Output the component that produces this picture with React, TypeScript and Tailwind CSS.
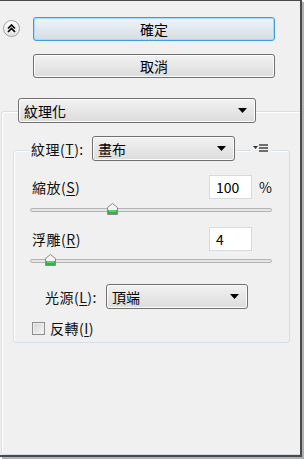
import React from 'react';

const FONT = { fontFamily: '"Segoe UI", "Noto Sans CJK TC", "Noto Sans", sans-serif' };

function Mn({ k }: { k: string }) {
  return (
    <span>
      (<span className="underline underline-offset-2">{k}</span>)
    </span>
  );
}

function Caret() {
  return (
    <svg width="9" height="5" viewBox="0 0 9 5" className="shrink-0">
      <path d="M0 0h9L4.5 5z" fill="#000" />
    </svg>
  );
}

function Combo({ label, className }: { label: string; className: string }) {
  return (
    <div
      className={`flex items-center justify-between h-[25px] pl-[5px] pr-[8px] border border-[#707070] rounded-[3px] bg-gradient-to-b from-[#f2f2f2] to-[#dcdcdc] shadow-[inset_0_0_0_1px_#fcfcfc] ${className}`}
    >
      <span className="text-[14px] leading-none text-black">{label}</span>
      <Caret />
    </div>
  );
}

function Slider({ pos }: { pos: number }) {
  return (
    <div className="relative h-[13px] ml-[16px] w-[242px]">
      <div className="absolute left-0 right-0 top-[5px] h-[4px] rounded-full border border-[#b4b4b4] bg-[#e6e6e6]" />
      <svg
        width="11"
        height="12"
        viewBox="0 0 11 12"
        className="absolute top-0"
        style={{ left: pos - 5 }}
      >
        <path d="M5.5 0.5L10.5 4.5V11.5H0.5V4.5Z" fill="#f4f4f4" stroke="#8a8a8a" />
        <path d="M1 7H10V11H1Z" fill="#2fb34a" />
        <path d="M2 8H9" stroke="#8fe09a" />
      </svg>
    </div>
  );
}

function NumInput({ value }: { value: string }) {
  return (
    <div className="w-[43px] h-[24px] bg-white border border-[#d4dae0] flex items-center pl-[6px] text-[14px] leading-none text-black">
      {value}
    </div>
  );
}

export default function App() {
  return (
    <div className="w-[304px] h-[459px] bg-white" style={FONT}>
      <div className="w-[302px] h-[457px] bg-[#f0f0f0] border-t border-r-2 border-b-2 border-[#4a4a4a] shadow-[2px_2px_1px_#b0b0b0] overflow-hidden text-[#111]">
        {/* Buttons */}
        <div className="flex items-start mt-[16px]">
          <div className="ml-[3px] mt-[3px] w-[17px] h-[17px] rounded-full border border-[#9aa0a6] bg-gradient-to-b from-white to-[#e4e4e4] flex items-center justify-center">
            <svg width="9" height="9" viewBox="0 0 9 9">
              <path d="M1 4.5L4.5 1L8 4.5M1 8L4.5 4.5L8 8" fill="none" stroke="#000" strokeWidth="1.6" />
            </svg>
          </div>
          <div className="ml-[13px] flex flex-col gap-[13px]">
            <button className="w-[242px] h-[24px] rounded-[3px] border border-[#3c9fd6] shadow-[inset_0_0_0_1px_#a8dcf6] bg-gradient-to-b from-[#eef5fa] to-[#d5dde3] text-[14px] leading-none text-black">
              確定
            </button>
            <button className="w-[242px] h-[24px] rounded-[3px] border border-[#707070] shadow-[inset_0_0_0_1px_#fcfcfc] bg-gradient-to-b from-[#f2f2f2] to-[#dcdcdc] text-[14px] leading-none text-black">
              取消
            </button>
          </div>
        </div>

        {/* Outer group */}
        <div className="mt-[33px] ml-[1px] w-[312px] h-[344px] border border-[#d5dfe5] rounded-[3px] shadow-[inset_1px_1px_0_#fff]">
          <Combo label="紋理化" className="-mt-[14px] ml-[16px] w-[238px]" />

          {/* Inner group */}
          <div className="mt-[27px] ml-[11px] w-[277px] h-[193px] border border-[#d5dfe5] rounded-[3px] shadow-[inset_1px_1px_0_#fff]">
            <div className="flex items-center -mt-[15px]">
              <span className="ml-[15px] w-[63px] px-[2px] bg-[#f0f0f0] text-[14px] leading-none tracking-[0.5px]">
                紋理<Mn k="T" />:
              </span>
              <Combo label="畫布" className="w-[143px]" />
              <span className="ml-[16px] px-[2px] bg-[#f0f0f0] flex items-center gap-[1px]">
                <svg width="16" height="9" viewBox="0 0 16 9">
                  <path d="M0 2h5L2.5 5z" fill="#333" />
                  <path d="M6 1h9M6 4h9M6 7h9" stroke="#444" strokeWidth="1.3" />
                </svg>
              </span>
            </div>

            {/* 縮放 */}
            <div className="flex items-center mt-[14px] pl-[18px]">
              <span className="w-[177px] text-[14px] leading-none tracking-[0.5px]">
                縮放<Mn k="S" />
              </span>
              <NumInput value="100" />
              <span className="ml-[7px] text-[14px] leading-none">%</span>
            </div>
            <div className="mt-[4px]">
              <Slider pos={82} />
            </div>

            {/* 浮雕 */}
            <div className="flex items-center mt-[11px] pl-[18px]">
              <span className="w-[177px] text-[14px] leading-none tracking-[0.5px]">
                浮雕<Mn k="R" />
              </span>
              <NumInput value="4" />
            </div>
            <div className="mt-[3px]">
              <Slider pos={20} />
            </div>

            {/* 光源 */}
            <div className="flex items-center mt-[17px] pl-[31px]">
              <span className="w-[61px] text-[14px] leading-none tracking-[0.5px]">
                光源<Mn k="L" />:
              </span>
              <Combo label="頂端" className="w-[142px]" />
            </div>

            {/* 反轉 */}
            <div className="flex items-center mt-[12px] pl-[18px]">
              <div className="w-[13px] h-[13px] border border-[#8f8f8f] bg-gradient-to-br from-[#d4d4d4] to-[#f6f6f6] shadow-[inset_0_0_0_1px_#eeeeee]" />
              <span className="ml-[5px] text-[14px] leading-none tracking-[0.5px]">
                反轉<Mn k="I" />
              </span>
            </div>
          </div>
        </div>
      </div>
    </div>
  );
}
